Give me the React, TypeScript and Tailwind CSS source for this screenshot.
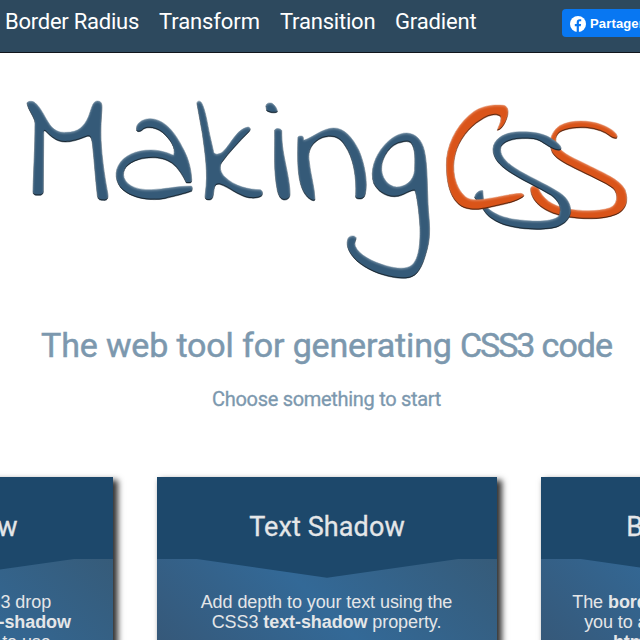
import type { ReactNode } from "react";

const BLUE = "#355a78";
const ORANGE = "#da5419";

function Logo() {
  return (
    <svg viewBox="0 0 640 200" className="block h-[200px] w-[640px]" aria-label="MakingCSS">
      <defs>
        <filter id="bevel" x="-5%" y="-5%" width="110%" height="115%" colorInterpolationFilters="sRGB">
          <feOffset in="SourceAlpha" dx="-0.5" dy="-1.1" result="up" />
          <feGaussianBlur in="up" stdDeviation="0.65" result="upBlur" />
          <feComposite in="SourceAlpha" in2="upBlur" operator="out" result="lowEdge" />
          <feFlood floodColor="#000" floodOpacity="0.7" />
          <feComposite in2="lowEdge" operator="in" result="dark" />
          <feOffset in="SourceAlpha" dx="0.2" dy="1" result="down" />
          <feGaussianBlur in="down" stdDeviation="0.8" result="downBlur" />
          <feComposite in="SourceAlpha" in2="downBlur" operator="out" result="highEdge" />
          <feFlood floodColor="#fff" floodOpacity="0.35" />
          <feComposite in2="highEdge" operator="in" result="light" />
          <feMerge>
            <feMergeNode in="SourceGraphic" />
            <feMergeNode in="light" />
            <feMergeNode in="dark" />
          </feMerge>
        </filter>
      </defs>
      <g transform="translate(0 -85)" strokeWidth="1">
        <g filter="url(#bevel)" fill={BLUE} stroke={BLUE}>
          <g transform="translate(15 85) scale(.33333)">
            <path d="M36 54C38 48 52 47 60 53C76 66 87 91 98 109C116 140 135 143 154 142C190 142 207 125 220 96C230 73 232 47 248 48C261 49 262 58 260 83C258 111 257 131 258 166C260 216 269 277 278 324C281 343 276 347 264 346C253 346 249 344 247 331C241 278 238 228 233 183C230 151 224 150 209 157C182 167 169 171 151 171C124 171 108 155 92 139C85 134 86 141 86 155L85 320C84 330 78 331 68 331C58 331 54 328 54 320C56 244 60 189 60 114C59 96 39 76 36 54Z" />
            <path fillRule="evenodd" d="M365 137C361 115 381 102 405 101C457 103 487 156 507 196C523 227 529 260 530 284C530 294 528 295 514 294C504 273 490 249 471 235C442 214 400 216 371 224C337 234 320 255 327 278C338 307 374 315 409 314C449 313 484 303 529 303C533 306 532 315 530 319C508 327 483 333 449 341C410 348 365 342 335 323C305 306 296 269 310 242C326 211 364 195 408 195C435 195 460 204 476 211C484 188 465 163 443 143C425 129 400 124 386 132C379 139 370 143 365 137Z" />
          </g>
          <g transform="translate(190 85) scale(.33333)">
            <path d="M21 56C21 46 32 46 36 56C47 79 52 116 59 149L71 202C75 211 91 208 100 199C126 173 140 132 174 126C183 128 182 136 176 142C147 171 118 202 95 233C87 245 91 263 105 276C133 304 177 314 211 314C219 318 219 328 214 334C203 340 192 340 178 339C144 333 118 307 89 298C74 295 73 308 71 322C69 337 68 344 58 345C46 345 44 341 46 326C55 263 45 204 37 145Z" />
            <path d="M228 64C228 54 239 52 246 55C255 60 262 73 262 81C253 86 238 83 230 77Z" />
            <path d="M254 136C256 129 272 129 275 137C275 171 278 194 286 233C294 273 300 301 300 328C299 342 291 345 282 345C271 343 266 333 262 316C250 254 255 199 254 136Z" />
          </g>
          <g transform="translate(290 110) scale(.33333)">
            <path d="M24 81C27 77 37 77 39 80L41 91C68 83 97 55 130 54C163 53 188 84 206 120C223 158 234 216 226 251C224 263 217 268 208 267C198 267 195 262 197 254C200 200 190 144 166 109C148 78 124 75 96 84C66 97 53 122 57 150C61 193 74 231 75 270C70 276 58 268 50 259C20 226 22 146 24 81Z" />
            <path fillRule="evenodd" d="M350 69C379 71 395 90 403 122C413 166 411 232 415 301C418 336 423 374 412 416C401 458 389 490 366 500C345 510 307 503 280 495C240 483 202 461 184 434C174 419 168 403 174 386C178 376 194 375 198 383C200 389 191 397 196 409C207 435 249 456 288 467C319 476 349 479 366 465C389 445 391 394 390 351C387 300 380 255 375 242C363 239 346 254 326 259C295 265 265 249 251 220C239 182 255 138 282 107C302 84 326 69 350 69ZM336 97C302 101 277 142 275 169C271 202 295 230 320 231C346 231 371 213 374 181C375 151 377 116 363 99C354 93 344 94 336 97Z" />
          </g>
        </g>
        <g transform="translate(435 90)">
          <g filter="url(#bevel)">
            <path transform="scale(.33333)" fill={ORANGE} stroke={ORANGE} d="M545 145C535 148 525 138 512 130C478 111 426 109 390 120C365 127 355 146 368 168C384 193 421 206 458 225C503 248 555 268 570 299C582 332 574 361 543 374C501 391 437 388 390 380C342 371 297 347 288 307C285 288 290 285 309 293C323 326 350 346 394 356C434 363 486 366 523 354C549 345 551 312 535 296C513 278 462 257 421 236C387 219 354 203 349 180C340 155 350 123 374 107C410 88 463 90 500 104C523 113 553 130 545 145Z" />
          </g>
          <g filter="url(#bevel)">
            <path transform="scale(.33333)" fill={BLUE} stroke={BLUE} d="M377 179C370 183 360 179 348 173C326 162 316 147 286 146C249 144 211 149 198 170C191 192 210 215 240 234C276 258 328 279 367 304C394 319 408 341 407 366C404 389 388 402 369 410C333 423 254 420 206 404C170 390 155 377 142 354L119 323C121 310 132 300 143 302L146 340C166 371 210 386 255 390C300 395 352 396 371 379C383 354 371 333 348 316C310 292 260 271 223 246C194 226 174 206 174 177C176 147 205 130 241 126C283 124 319 127 347 144C368 157 382 170 377 179Z" />
          </g>
          <g filter="url(#bevel)">
            <path transform="scale(.33333)" fill={ORANGE} stroke={ORANGE} d="M187 121C191 107 201 93 197 80C180 68 157 78 137 91C103 111 71 152 61 192C49 237 58 291 91 320C109 334 134 329 157 326C190 322 221 312 258 310C269 313 268 319 261 323C231 341 194 345 157 354C128 361 90 362 69 341C37 313 32 248 35 205C42 145 76 94 116 65C139 49 175 42 205 46C221 49 221 68 216 83C210 101 200 119 187 121Z" />
          </g>
        </g>
      </g>
    </svg>
  );
}

function Card({ title, children }: { title: string; children: ReactNode }) {
  return (
    <article className="h-[266px] w-[340px] shrink-0 bg-[linear-gradient(45deg,#37506a_0%,#336997_50%,#37566e_100%)] text-center text-[#e4e6e8] shadow-[4px_4px_6px_1px_rgba(0,0,0,0.8)]">
      <h2 className="h-[82px] bg-[#1d486b] pt-[30px] font-[Roboto,sans-serif] text-[27px] leading-[40px] tracking-[0.1px] [-webkit-text-stroke:0.3px_currentColor]">{title}</h2>
      <svg viewBox="0 0 340 19" className="block h-[19px] w-full">
        <path d="M40 0L170 18.7L301 0Z" fill="#1d486b" />
      </svg>
      <p className="pr-px pt-[14px] font-['Liberation_Sans',Arial,sans-serif] text-[18px] leading-5 tracking-[-0.08px] whitespace-nowrap">{children}</p>
    </article>
  );
}

export default function App() {
  return (
    <div className="h-[640px] w-[640px] overflow-hidden bg-white">
      <header className="flex h-[53px] items-start border-b border-[#10151c] bg-[#2d495e]">
        <nav className="flex w-[562px] shrink-0 pl-[5px] pt-[7px] font-[Roboto,sans-serif] text-[22px] leading-[30px] whitespace-nowrap text-white">
          <a className="w-[154px] tracking-[-0.25px]">Border Radius</a>
          <a className="w-[121px] tracking-[-0.1px]">Transform</a>
          <a className="w-[115px] tracking-[-0.2px]">Transition</a>
          <a className="tracking-[-0.15px]">Gradient</a>
        </nav>
        <button className="mt-[9px] flex h-7 w-[110px] shrink-0 items-center gap-1 rounded bg-[#0877f2] pl-2 font-['Liberation_Sans',Arial,sans-serif] text-[13px] font-bold text-white">
          <svg viewBox="0 0 16 16" className="mt-[2px] h-4 w-4 shrink-0">
            <circle cx="8" cy="8" r="8" fill="white" />
            <path d="M6.7 16V10.3H4.8V8H6.7V6.5C6.7 4.2 7.8 3.2 9.8 3.2L11.2 3.35V5.3H10.2C9.2 5.3 8.9 5.8 8.9 6.6V8H11.1L10.7 10.3H8.9V16Z" fill="#0877f2" />
          </svg>
          <span className="mt-[2px] tracking-[0.15px]">Partager</span>
        </button>
      </header>
      <main>
        <div className="pt-8">
          <Logo />
        </div>
        <h1 className="ml-[41px] mt-[38px] font-[Roboto,sans-serif] text-[34px] leading-[44px] tracking-[-0.14px] whitespace-nowrap text-[#7c98ae] [-webkit-text-stroke:0.5px_currentColor]">
          The web tool for generating <span className="tracking-[-2.1px]">CSS3</span> <span className="tracking-[-1px]">code</span>
        </h1>
        <p className="ml-[212px] mt-[18px] font-[Roboto,sans-serif] text-[20px] leading-7 tracking-[-0.3px] whitespace-nowrap text-[#7c98ae] [-webkit-text-stroke:0.3px_currentColor]">Choose something to start</p>
        <section className="-ml-[227px] mt-16 flex gap-[44px]">
          <Card title="Box Shadow">
            Generate easily CSS3 drop<br />shadows using the <b>box-shadow</b><br />property. It is so easy to use.
          </Card>
          <Card title="Text Shadow">
            Add depth to your text using the<br />CSS3 <b>text-shadow</b> property.
          </Card>
          <Card title="Border Radius">
            The <b>border-radius</b> property allows<br />you to add rounded corners to a<br /><b>html</b> element very easily
          </Card>
        </section>
      </main>
    </div>
  );
}
